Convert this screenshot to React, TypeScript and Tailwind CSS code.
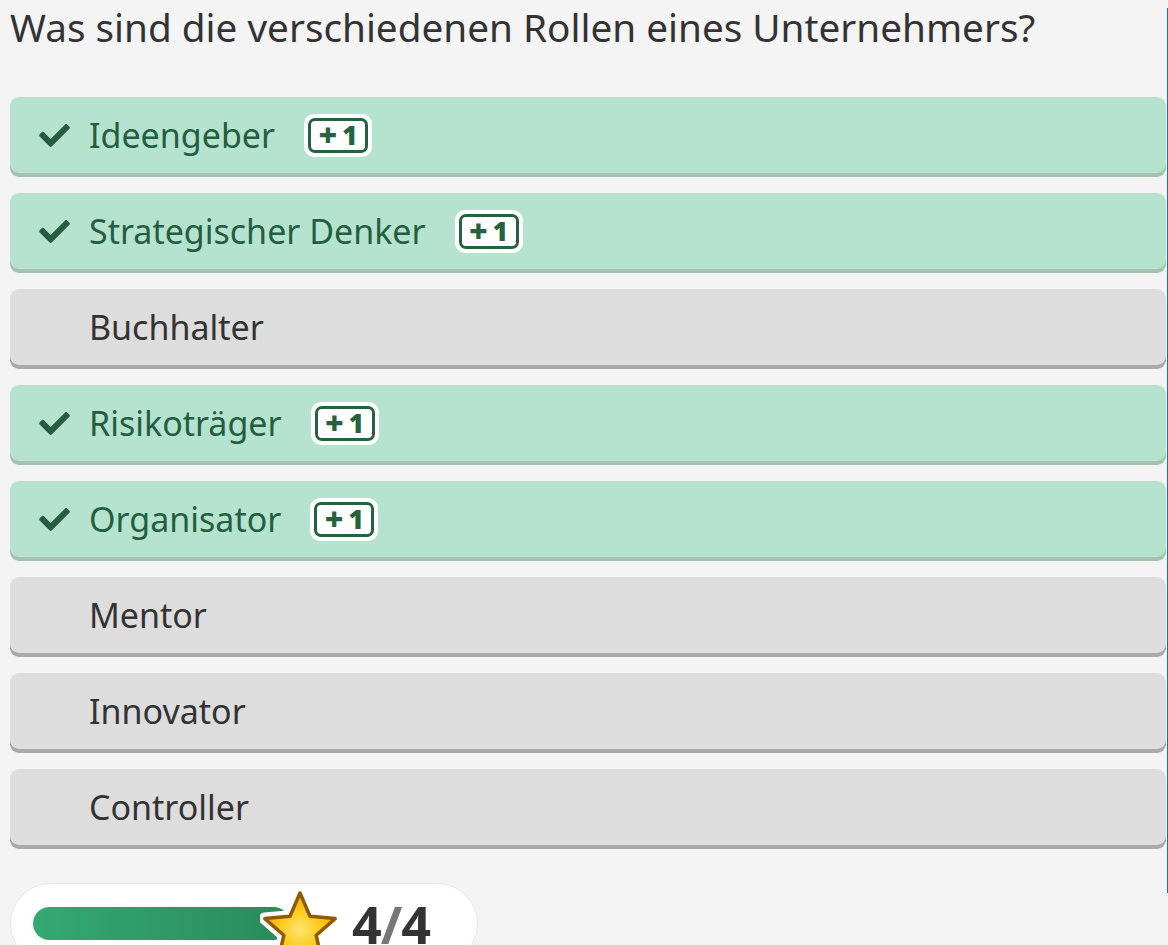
type Option = {
  label: string;
  correct: boolean;
};

const options: Option[] = [
  { label: "Ideengeber", correct: true },
  { label: "Strategischer Denker", correct: true },
  { label: "Buchhalter", correct: false },
  { label: "Risikoträger", correct: true },
  { label: "Organisator", correct: true },
  { label: "Mentor", correct: false },
  { label: "Innovator", correct: false },
  { label: "Controller", correct: false },
];

function CheckIcon() {
  return (
    <svg width="31" height="23" viewBox="0 64 512 384" fill="#245e40">
      <path d="M173.898 439.404l-166.4-166.4c-9.997-9.997-9.997-26.206 0-36.204l36.203-36.204c9.997-9.998 26.207-9.998 36.204 0L192 312.69 432.095 72.596c9.997-9.997 26.207-9.997 36.204 0l36.203 36.204c9.997 9.997 9.997 26.206 0 36.204l-294.4 294.401c-9.998 9.997-26.207 9.997-36.204-.001z" />
    </svg>
  );
}

function PointBadge() {
  return (
    <div className="ml-[29px] rounded-[10px] bg-white p-[4px]">
      <div className="flex h-[35px] w-[60px] items-center justify-center gap-[5px] rounded-[7px] border-[3px] border-[#23633f] font-black leading-none text-[#23633f]">
        <span className="text-[32px]">+</span>
        <span className="text-[26px]">1</span>
      </div>
    </div>
  );
}

function Star() {
  const d =
    "M40 5 L49.99 28.25 L75.19 30.57 L56.17 47.25 L61.75 71.93 L40 59 L18.25 71.93 L23.83 47.25 L4.81 30.57 L30.01 28.25 Z";
  return (
    <svg width="80" height="80" viewBox="0 0 80 80">
      <defs>
        <radialGradient id="starFill" cx="50%" cy="55%" r="55%">
          <stop offset="0%" stopColor="#ffe670" />
          <stop offset="55%" stopColor="#fcc916" />
          <stop offset="100%" stopColor="#f2ab00" />
        </radialGradient>
      </defs>
      <path d={d} fill="none" stroke="#ffffff" strokeWidth="12" strokeLinejoin="round" />
      <path d={d} fill="url(#starFill)" stroke="#8f5a00" strokeWidth="3.5" strokeLinejoin="round" />
    </svg>
  );
}

export default function App() {
  return (
    <div className="relative min-h-screen overflow-hidden bg-[#f4f4f4] font-['Noto_Sans',sans-serif] text-[#333333]">
      <div className="pl-[10px] pr-[2px]">
        <h1 className="pt-[1px] text-[38.7px] font-normal leading-[53px]">
          Was sind die verschiedenen Rollen eines Unternehmers?
        </h1>

        {/* Answer options */}
        <div className="mt-[43px] flex flex-col gap-[20px]">
          {options.map((o) => (
            <div
              key={o.label}
              className={
                o.correct
                  ? "flex h-[76px] items-center rounded-[9px] bg-[#b5e3cf] pl-[29px] text-[#245e40] shadow-[0_4px_0_#a5c2b2]"
                  : "flex h-[76px] items-center rounded-[9px] bg-[#dddddd] pl-[29px] text-[#333333] shadow-[0_4px_0_#aaaaaa]"
              }
            >
              <div className="flex w-[31px] shrink-0 items-center justify-center">
                {o.correct && <CheckIcon />}
              </div>
              <span className="ml-[19px] text-[34px] leading-none">{o.label}</span>
              {o.correct && <PointBadge />}
            </div>
          ))}
        </div>

        {/* Progress */}
        <div className="mt-[38px] flex h-[81px] w-[468px] items-center rounded-full border border-[#e6e6e6] bg-white pl-[22px]">
          <div className="relative h-[33px] w-[257px]">
            <div className="h-full w-full rounded-full bg-gradient-to-r from-[#35a972] to-[#2a8a5b]" />
            <div className="absolute left-[227px] top-[-19px]">
              <Star />
            </div>
          </div>
          <div className="ml-[62px] flex items-center text-[52px] font-bold leading-none tracking-[-1px]">
            <span>4</span>
            <span className="text-[#777777]">/</span>
            <span>4</span>
          </div>
        </div>
      </div>

      {/* scroll indicator */}
      <div className="absolute right-0 top-[8px] h-[885px] w-[1px] bg-[#1b6fb3]" />
    </div>
  );
}
